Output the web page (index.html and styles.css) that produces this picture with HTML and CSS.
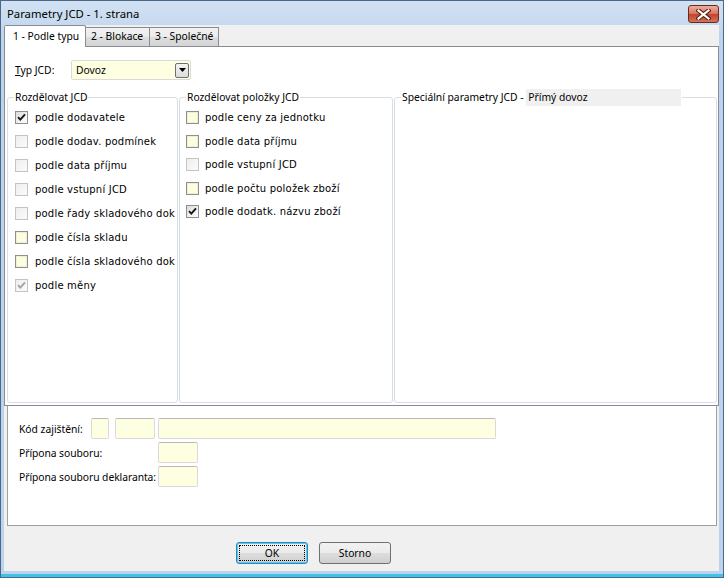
FILE: index.html
```html
<!DOCTYPE html>
<html lang="cs">

<head>
    <meta charset="utf-8">
    <title>Parametry JCD - 1. strana</title>
    <link rel="stylesheet" href="styles.css">
</head>

<body>
    <div class="okno">
        <div class="titulek">
            <span class="nazev">Parametry JCD - 1. strana</span>
            <button class="zavrit" aria-label="Zavřít">
                <svg width="15" height="11" viewBox="0 0 15 11">
                    <path d="M2.5 1.5 L12.5 9.5 M12.5 1.5 L2.5 9.5" stroke="#5a1d12" stroke-width="4.2" stroke-linecap="square" fill="none"/>
                    <path d="M2.5 1.5 L12.5 9.5 M12.5 1.5 L2.5 9.5" stroke="#ffffff" stroke-width="2.2" stroke-linecap="square" fill="none"/>
                </svg>
            </button>
        </div>

        <div class="obsah">
            <nav class="zalozky">
                <span class="zalozka vybrana">1 - Podle typu</span>
                <span class="zalozka z2">2 - Blokace</span>
                <span class="zalozka z3">3 - Společné</span>
            </nav>

            <div class="stranka">
                <div class="typ">
                    <label class="popis typ-popis"><u>T</u>yp JCD:</label>
                    <div class="combo">
                        <span>Dovoz</span>
                        <span class="sipka">
                            <svg width="7" height="4" viewBox="0 0 7 4"><path d="M0 0 H7 L3.5 4 Z" fill="#000"/></svg>
                        </span>
                    </div>
                </div>

                <div class="skupiny">
                    <fieldset class="skupina s1">
                        <legend>Rozdělovat JCD</legend>
                        <div class="volba"><span class="box"><svg width="11" height="11" viewBox="0 0 11 11"><path d="M2 5.2 L4.3 7.6 L9 2.3" stroke="#151515" stroke-width="1.9" fill="none"/></svg></span>podle dodavatele</div>
                        <div class="volba"><span class="box vyp"></span>podle dodav. podmínek</div>
                        <div class="volba"><span class="box vyp"></span>podle data příjmu</div>
                        <div class="volba"><span class="box vyp"></span>podle vstupní JCD</div>
                        <div class="volba"><span class="box vyp"></span>podle řady skladového dok</div>
                        <div class="volba"><span class="box zap"></span>podle čísla skladu</div>
                        <div class="volba"><span class="box zap"></span>podle čísla skladového dok</div>
                        <div class="volba"><span class="box vyp"><svg width="11" height="11" viewBox="0 0 11 11"><path d="M2 5.2 L4.3 7.6 L9 2.3" stroke="#a3a3a3" stroke-width="1.9" fill="none"/></svg></span>podle měny</div>
                    </fieldset>

                    <fieldset class="skupina s2">
                        <legend>Rozdělovat položky JCD</legend>
                        <div class="volba"><span class="box zap"></span>podle ceny za jednotku</div>
                        <div class="volba"><span class="box zap"></span>podle data příjmu</div>
                        <div class="volba"><span class="box vyp"></span>podle vstupní JCD</div>
                        <div class="volba"><span class="box zap"></span>podle počtu položek zboží</div>
                        <div class="volba"><span class="box"><svg width="11" height="11" viewBox="0 0 11 11"><path d="M2 5.2 L4.3 7.6 L9 2.3" stroke="#151515" stroke-width="1.9" fill="none"/></svg></span>podle dodatk. názvu zboží</div>
                    </fieldset>

                    <fieldset class="skupina s3">
                        <legend>Speciální parametry JCD - <span class="druh">Přímý dovoz</span></legend>
                    </fieldset>
                </div>
            </div>

            <div class="spodni">
                <div class="radek">
                    <span class="popis kod-popis">Kód zajištění:</span>
                    <span class="pole w18"></span>
                    <span class="pole w40 mezera"></span>
                    <span class="pole w338"></span>
                </div>
                <div class="radek">
                    <span class="popis dlouhy">Přípona souboru:</span>
                    <span class="pole w40"></span>
                </div>
                <div class="radek">
                    <span class="popis dlouhy">Přípona souboru deklaranta:</span>
                    <span class="pole w40"></span>
                </div>
            </div>

            <div class="tlacitka">
                <button class="tl vychozi">OK</button>
                <button class="tl">Storno</button>
            </div>
        </div>
    </div>
</body>

</html>
```

FILE: styles.css
```css
body {
    margin: 0;
    background: #fff;
}

.okno {
    width: 724px;
    height: 578px;
    box-sizing: border-box;
    border: 1px solid #49698c;
    background: linear-gradient(#d3e2f3, #bcd3eb 40px, #bcd3eb);
    box-shadow: inset 0 -3px 0 #40c2e6;
    display: flex;
    flex-direction: column;
    font-family: "Noto Sans", sans-serif;
    font-size: 10.3px;
    color: #000;
}

.titulek {
    height: 24px;
    display: flex;
    align-items: center;
    justify-content: space-between;
    padding: 0 4px 0 6px;
}

.nazev {
    font-size: 11.3px;
}

.zavrit {
    width: 31px;
    height: 18px;
    margin-top: 2px;
    padding: 0;
    border: 1px solid #6b2a20;
    border-radius: 3px;
    background: linear-gradient(#eab0a0, #d77259 50%, #c2432b 51%, #d0735b);
    display: flex;
    align-items: center;
    justify-content: center;
}

.obsah {
    flex: 1;
    margin: 0 4px 6px 3px;
    background: #f0f0f0;
    display: flex;
    flex-direction: column;
}

/* zalozky */

.zalozky {
    height: 21px;
    display: flex;
    align-items: flex-end;
}

.zalozka {
    box-sizing: border-box;
    height: 19px;
    line-height: 17px;
    border: 1px solid #898c95;
    border-bottom: none;
    border-left: none;
    padding-left: 5px;
    white-space: nowrap;
    background: linear-gradient(#f2f2f2, #ebebeb 50%, #dddddd 51%, #d4d4d4);
}

.vybrana {
    height: 22px;
    width: 82px;
    line-height: 20px;
    margin-bottom: -1px;
    padding-left: 8px;
    border-left: 1px solid #898c95;
    border-radius: 2px 2px 0 0;
    background: #fff;
    position: relative;
}

.z2 {
    width: 64px;
}

.z3 {
    width: 69px;
}

.stranka {
    height: 360px;
    box-sizing: border-box;
    border: 1px solid #898c95;
    background: #fff;
    display: flex;
    flex-direction: column;
}

.typ {
    display: flex;
    align-items: center;
    margin: 13px 0 0 10px;
}

.typ-popis {
    width: 56px;
}

.combo {
    box-sizing: border-box;
    width: 120px;
    height: 20px;
    border: 1px solid #dadada;
    border-radius: 2px;
    background: #fefee1;
    display: flex;
    align-items: center;
    justify-content: space-between;
    padding: 0 0 0 4px;
}

.sipka {
    box-sizing: border-box;
    width: 14px;
    height: 15px;
    margin-right: 1px;
    border: 1px solid #6f6f6f;
    border-radius: 2px;
    background: linear-gradient(#f4f4f4, #dcdcdc);
    display: flex;
    align-items: center;
    justify-content: center;
}

/* skupiny */

.skupiny {
    flex: 1;
    display: flex;
    gap: 1px;
    margin: 9px 1px 2px 2px;
}

.skupina {
    margin: 0;
    padding: 0 0 0 6px;
    min-width: 0;
    border: 1px solid #d5dfe5;
    border-radius: 3px;
}

.skupina legend {
    padding: 0 1px;
    line-height: 17px;
    white-space: nowrap;
}

.s1 {
    width: 171px;
    box-sizing: border-box;
}

.s2 {
    width: 214px;
    box-sizing: border-box;
}

.s3 {
    flex: 1;
}

.druh {
    display: inline-block;
    vertical-align: top;
    width: 153px;
    height: 17px;
    padding-left: 2px;
    background: #f0f0f0;
}

.volba {
    height: 24px;
    display: flex;
    align-items: center;
    margin-left: 1px;
    font-family: "DejaVu Sans", sans-serif;
    font-size: 10px;
    letter-spacing: 0.2px;
    white-space: nowrap;
}

.volba:first-of-type {
    margin-top: -1px;
}

.s2 .volba {
    height: 23.5px;
    margin-left: 0;
}

.s2 .volba:first-of-type {
    margin-top: 0;
}

.box {
    box-sizing: border-box;
    width: 13px;
    height: 13px;
    margin-right: 7px;
    border: 1px solid #8e8f8f;
    background: linear-gradient(135deg, #dcdcdc, #ffffff);
    display: flex;
    align-items: center;
    justify-content: center;
    flex-shrink: 0;
}

.s2 .box {
    margin-right: 6px;
}

.box.zap {
    background: #fdfde0;
    box-shadow: inset 0 0 0 1px #efefd6;
}

.box.vyp {
    border-color: #c4c4c4;
    background: linear-gradient(135deg, #eeeeee, #fbfbfb);
}

/* spodni panel */

.spodni {
    height: 120px;
    box-sizing: border-box;
    margin: 0 2px 0 3px;
    border: 1px solid #a0a0a0;
    border-top: none;
    background: #fff;
    padding: 12px 0 0 11px;
    display: flex;
    flex-direction: column;
    gap: 3px;
}

.radek {
    display: flex;
    align-items: center;
    height: 21px;
}

.popis {
    white-space: nowrap;
}

.kod-popis {
    width: 72px;
}

.dlouhy {
    width: 139px;
    letter-spacing: -0.05px;
}

.pole {
    box-sizing: border-box;
    height: 21px;
    border: 1px solid #dadada;
    border-top-color: #b9b9b9;
    border-radius: 2px;
    background: #fefee1;
    margin-right: 3px;
}

.w18 {
    width: 18px;
    margin-right: 6px;
}

.w40 {
    width: 40px;
}

.w338 {
    width: 338px;
}

/* tlacitka */

.tlacitka {
    display: flex;
    gap: 11px;
    padding: 16px 0 0 232px;
}

.tl {
    box-sizing: border-box;
    width: 72px;
    height: 22px;
    padding: 0;
    border: 1px solid #707070;
    border-radius: 3px;
    background: linear-gradient(#f2f2f2, #ebebeb 50%, #dddddd 51%, #cfcfcf);
    font-family: "Noto Sans", sans-serif;
    font-size: 10.3px;
    color: #000;
}

.vychozi {
    border-color: #3c7fb1;
    box-shadow: inset 0 0 0 1px #48d0fd;
    outline: 1px dotted #000;
    outline-offset: -4px;
}
```
